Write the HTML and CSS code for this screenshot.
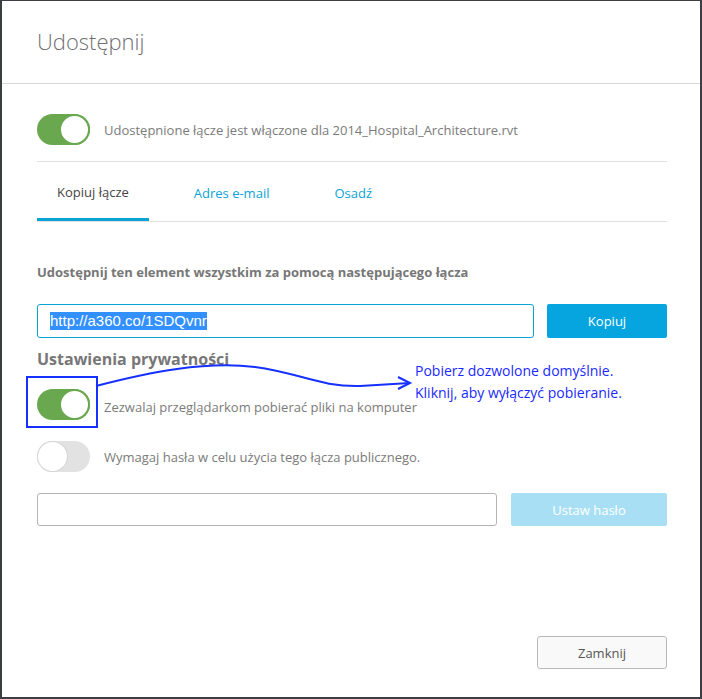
FILE: index.html
```html
<!DOCTYPE html>
<html lang="pl">
<head>
<meta charset="utf-8">
<link rel="stylesheet" href="styles.css">
</head>
<body>
<div class="dialog">
  <div class="header"><h1 class="title">Udostępnij</h1></div>
  <div class="content">
    <div class="toggle-row first">
      <span class="toggle on"><span class="knob"></span></span>
      <span class="toggle-text">Udostępnione łącze jest włączone dla 2014_Hospital_Architecture.rvt</span>
    </div>
    <div class="sep"></div>
    <div class="tabs">
      <span class="tab active">Kopiuj łącze</span>
      <span class="tab">Adres e-mail</span>
      <span class="tab">Osadź</span>
    </div>
    <div class="label">Udostępnij ten element wszystkim za pomocą następującego łącza</div>
    <div class="field-row link-row">
      <div class="input focused"><span class="selected">http://a360.co/1SDQvnr</span></div>
      <button class="btn primary">Kopiuj</button>
    </div>
    <div class="heading">Ustawienia prywatności</div>
    <div class="toggle-row second">
      <span class="toggle on"><span class="knob"></span></span>
      <span class="toggle-text low">Zezwalaj przeglądarkom pobierać pliki na komputer</span>
    </div>
    <div class="toggle-row third">
      <span class="toggle off"><span class="knob"></span></span>
      <span class="toggle-text">Wymagaj hasła w celu użycia tego łącza publicznego.</span>
    </div>
    <div class="field-row pass-row">
      <div class="input"></div>
      <button class="btn primary disabled">Ustaw hasło</button>
    </div>
    <div class="footer">
      <button class="btn secondary">Zamknij</button>
    </div>
  </div>
  <div class="annot-box"></div>
  <svg class="annot-arrow" width="702" height="699" viewBox="0 0 702 699">
    <path d="M96 386 C150 372 205 361 255 367 C300 373 320 387 360 386 L410 383" fill="none" stroke="#1530ff" stroke-width="2"/>
    <path d="M398 377 L410 383 L398 389" fill="none" stroke="#1530ff" stroke-width="2"/>
  </svg>
  <div class="annot-text">
    <div>Pobierz dozwolone domyślnie.</div>
    <div>Kliknij, aby wyłączyć pobieranie.</div>
  </div>
</div>
</body>
</html>
```

FILE: styles.css
```css
* { box-sizing: border-box; }
html, body { margin: 0; padding: 0; background: #fff; }
body { font-family: "Open Sans", "Liberation Sans", sans-serif; color: #777; }

.dialog {
  position: relative;
  width: 702px;
  height: 699px;
  border: 2px solid #3b3f44;
  border-top-width: 1px;
  display: flex;
  flex-direction: column;
  overflow: hidden;
}

.header {
  height: 83px;
  border-bottom: 1px solid #d9d9d9;
  padding-left: 35px;
  display: flex;
  align-items: center;
}
.title {
  margin: 0;
  font-size: 22px;
  font-weight: 300;
  color: #6f6f6f;
  padding-bottom: 2px;
}

.content {
  flex: 1;
  display: flex;
  flex-direction: column;
  padding: 0 33px 0 35px;
}

.toggle-row {
  display: flex;
  align-items: center;
  height: 31px;
}
.toggle-row.first { margin-top: 30px; }
.toggle-row.second { margin-top: 19px; }
.toggle-row.third { margin-top: 21px; }

.toggle {
  position: relative;
  width: 53px;
  height: 31px;
  border-radius: 16px;
  flex: none;
}
.toggle.on { background: #6aa84f; }
.toggle.off { background: #e2e2e2; }
.knob {
  position: absolute;
  border-radius: 50%;
  background: #fff;
}
.toggle.on .knob { top: 0; right: 0; width: 31px; height: 31px; border: 2px solid #6aa84f; }
.toggle.off .knob { top: 1px; left: 1px; width: 29px; height: 29px; box-shadow: 0 0 0 1px #d5d5d5; }

.toggle-text {
  margin-left: 14px;
  font-size: 13px;
  color: #7b7b7b;
}
.toggle-text.low { position: relative; top: 2px; }

.sep {
  margin-top: 16px;
  height: 1px;
  background: #e0e0e0;
}

.tabs {
  display: flex;
  height: 60px;
  border-bottom: 1px solid #e0e0e0;
}
.tab {
  display: flex;
  align-items: center;
  padding: 3px 20px 0;
  font-size: 13px;
  color: #0aa3d8;
  margin-right: 25px;
}
.tab.active {
  color: #444;
  border-bottom: 3px solid #0aa3d8;
}

.label {
  margin-top: 41px;
  font-size: 13px;
  font-weight: 700;
  color: #777;
  line-height: 18px;
}

.field-row {
  display: flex;
  gap: 13px;
}
.link-row { margin-top: 23px; height: 34px; }
.pass-row { margin-top: 21px; height: 33px; gap: 14px; }

.input {
  flex: 1;
  border: 1px solid #b4b4b4;
  border-radius: 3px;
  display: flex;
  align-items: center;
  padding-left: 12px;
  font-family: "Liberation Sans", Arial, sans-serif;
  font-size: 15px;
}
.input.focused { border-color: #0aa3d8; }
.selected {
  background: #3390ff;
  color: #fff;
  line-height: 18px;
}

.btn {
  font-family: "Open Sans", "Liberation Sans", sans-serif;
  font-size: 13px;
  border-radius: 2px;
  cursor: pointer;
}
.btn.primary {
  width: 120px;
  background: #06a5df;
  border: none;
  color: #fff;
}
.pass-row .btn.primary { width: 156px; }
.btn.primary.disabled { background: #a8dff5; }

.heading {
  margin-top: 10px;
  font-size: 16px;
  font-weight: 700;
  color: #777;
  line-height: 22px;
}

.footer {
  margin-top: auto;
  margin-bottom: 28px;
  display: flex;
  justify-content: flex-end;
}
.btn.secondary {
  width: 130px;
  height: 33px;
  background: #f9f9f9;
  border: 1px solid #b9b9b9;
  border-radius: 3px;
  color: #555;
}

.annot-box {
  position: absolute;
  left: 24px;
  top: 375px;
  width: 72px;
  height: 52px;
  border: 2px solid #1530ff;
}
.annot-arrow {
  position: absolute;
  left: -2px;
  top: -1px;
  pointer-events: none;
}
.annot-text {
  position: absolute;
  left: 413px;
  top: 359px;
  font-size: 14px;
  line-height: 22px;
  color: #1a2aff;
}
```
